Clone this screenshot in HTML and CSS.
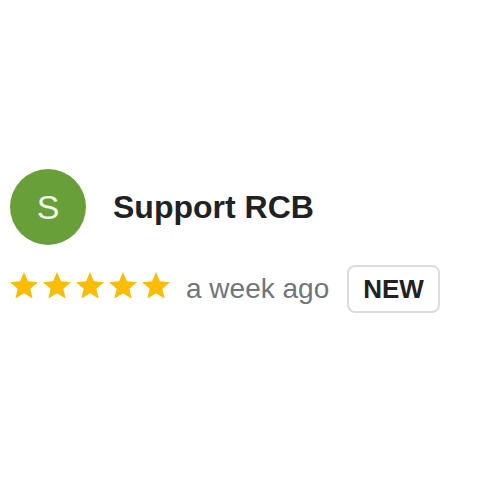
FILE: index.html
```html
<!DOCTYPE html>
<html lang="en">
<head>
    <meta charset="UTF-8">
    <meta name="viewport" content="width=device-width, initial-scale=1.0">
    <title>Review</title>
    <link rel="stylesheet" href="styles.css">
</head>
<body>
    <div class="review">
        <div class="author">
            <div class="avatar">S</div>
            <div class="name">Support RCB</div>
        </div>

        <div class="meta">
            <div class="stars">
                <svg class="star" viewBox="2 2 20 19"><path d="M12 17.27L18.18 21l-1.64-7.03L22 9.24l-7.19-.61L12 2 9.19 8.63 2 9.24l5.46 4.73L5.82 21z"/></svg>
                <svg class="star" viewBox="2 2 20 19"><path d="M12 17.27L18.18 21l-1.64-7.03L22 9.24l-7.19-.61L12 2 9.19 8.63 2 9.24l5.46 4.73L5.82 21z"/></svg>
                <svg class="star" viewBox="2 2 20 19"><path d="M12 17.27L18.18 21l-1.64-7.03L22 9.24l-7.19-.61L12 2 9.19 8.63 2 9.24l5.46 4.73L5.82 21z"/></svg>
                <svg class="star" viewBox="2 2 20 19"><path d="M12 17.27L18.18 21l-1.64-7.03L22 9.24l-7.19-.61L12 2 9.19 8.63 2 9.24l5.46 4.73L5.82 21z"/></svg>
                <svg class="star" viewBox="2 2 20 19"><path d="M12 17.27L18.18 21l-1.64-7.03L22 9.24l-7.19-.61L12 2 9.19 8.63 2 9.24l5.46 4.73L5.82 21z"/></svg>
            </div>
            <span class="date">a week ago</span>
            <span class="badge">NEW</span>
        </div>
    </div>
</body>
</html>
```

FILE: styles.css
```css
/* review card, scaled up */
body {
    margin: 0;
    font-family: "Liberation Sans", Arial, sans-serif;
    background-color: #fff;
}

.review {
    padding: 169px 0 0 10px;
}

.author {
    display: flex;
    align-items: center;
    gap: 27px;
}

.avatar {
    width: 76px;
    height: 76px;
    border-radius: 50%;
    background-color: #689f38; /* green */
    color: #f1f7ec;
    font-size: 34px;
    display: flex;
    align-items: center;
    justify-content: center;
}

.name {
    font-size: 32px;
    font-weight: bold;
    color: #202124;
}

.meta {
    display: flex;
    align-items: center;
    margin-top: 20px;
}

.stars {
    display: flex;
    gap: 5px;
    margin-top: -8px;
}

.star {
    width: 28px;
    height: 26.6px;
    fill: #fbbc04;
}

.date {
    margin-left: 16px;
    font-size: 28px;
    color: #70757a;
}

.badge {
    margin-left: 18px;
    padding: 0 14px;
    height: 44px;
    line-height: 44px;
    border: 2px solid #dadce0;
    border-radius: 8px;
    font-size: 26px;
    font-weight: bold;
    color: #202124;
}
```
